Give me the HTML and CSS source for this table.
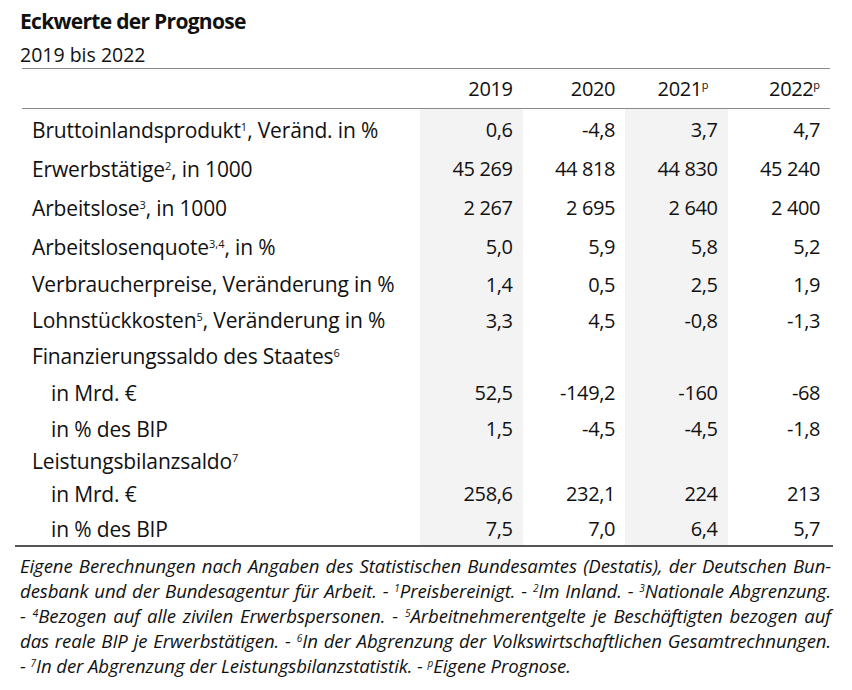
FILE: index.html
```html
<!DOCTYPE html>
<html lang="de">
<head>
<meta charset="utf-8">
<title>Eckwerte der Prognose</title>
<link rel="stylesheet" href="styles.css">
</head>
<body>
<div class="page">
  <h1 class="title">Eckwerte der Prognose</h1>
  <div class="subtitle">2019 bis 2022</div>
  <table class="data">
    <colgroup>
      <col class="c-label"><col class="c-num"><col class="c-num"><col class="c-num"><col class="c-num">
    </colgroup>
    <thead>
      <tr>
        <th></th>
        <th>2019</th>
        <th>2020</th>
        <th class="h-2021">2021<sup>p</sup></th>
        <th>2022<sup>p</sup></th>
      </tr>
    </thead>
    <tbody>
      <tr class="r39"><td class="lbl">Bruttoinlandsprodukt<sup>1</sup>, Veränd. in %</td><td class="sh">0,6</td><td>-4,8</td><td class="sh">3,7</td><td>4,7</td></tr>
      <tr class="r39"><td class="lbl">Erwerbstätige<sup>2</sup>, in 1000</td><td class="sh">45 269</td><td>44 818</td><td class="sh">44 830</td><td>45 240</td></tr>
      <tr class="r39"><td class="lbl">Arbeitslose<sup>3</sup>, in 1000</td><td class="sh">2 267</td><td>2 695</td><td class="sh">2 640</td><td>2 400</td></tr>
      <tr class="r39"><td class="lbl">Arbeitslosenquote<sup>3,4</sup>, in %</td><td class="sh">5,0</td><td>5,9</td><td class="sh">5,8</td><td>5,2</td></tr>
      <tr class="r36"><td class="lbl">Verbraucherpreise, Veränderung in %</td><td class="sh">1,4</td><td>0,5</td><td class="sh">2,5</td><td>1,9</td></tr>
      <tr class="r36"><td class="lbl">Lohnstückkosten<sup>5</sup>, Veränderung in %</td><td class="sh">3,3</td><td>4,5</td><td class="sh">-0,8</td><td>-1,3</td></tr>
      <tr class="r36"><td class="lbl">Finanzierungssaldo des Staates<sup>6</sup></td><td class="sh"></td><td></td><td class="sh"></td><td></td></tr>
      <tr class="r37"><td class="lbl sub">in Mrd. €</td><td class="sh">52,5</td><td>-149,2</td><td class="sh">-160</td><td>-68</td></tr>
      <tr class="r35"><td class="lbl sub">in % des BIP</td><td class="sh">1,5</td><td>-4,5</td><td class="sh">-4,5</td><td>-1,8</td></tr>
      <tr class="r30"><td class="lbl">Leistungsbilanzsaldo<sup>7</sup></td><td class="sh"></td><td></td><td class="sh"></td><td></td></tr>
      <tr class="r35"><td class="lbl sub">in Mrd. €</td><td class="sh">258,6</td><td>232,1</td><td class="sh">224</td><td>213</td></tr>
      <tr class="r35"><td class="lbl sub">in % des BIP</td><td class="sh">7,5</td><td>7,0</td><td class="sh">6,4</td><td>5,7</td></tr>
    </tbody>
  </table>
  <div class="notes">
    <span class="ln">Eigene Berechnungen nach Angaben des Statistischen Bundesamtes (Destatis), der Deutschen Bun-</span>
    <span class="ln">desbank und der Bundesagentur für Arbeit. - <sup>1</sup>Preisbereinigt. - <sup>2</sup>Im Inland. - <sup>3</sup>Nationale Abgrenzung.</span>
    <span class="ln">- <sup>4</sup>Bezogen auf alle zivilen Erwerbspersonen. - <sup>5</sup>Arbeitnehmerentgelte je Beschäftigten bezogen auf</span>
    <span class="ln">das reale BIP je Erwerbstätigen. - <sup>6</sup>In der Abgrenzung der Volkswirtschaftlichen Gesamtrechnungen.</span>
    <span class="ln last">- <sup>7</sup>In der Abgrenzung der Leistungsbilanzstatistik. - <sup>p</sup>Eigene Prognose.</span>
  </div>
</div>
</body>
</html>
```

FILE: styles.css
```css
html, body {
  margin: 0;
  padding: 0;
  background: #ffffff;
}

body {
  font-family: "Open Sans", "Noto Sans", sans-serif;
  color: #111111;
}

.page {
  width: 852px;
  height: 690px;
  padding-top: 8px;
  box-sizing: border-box;
}

.title {
  margin: 0 0 0 20px;
  font-size: 21px;
  font-weight: 700;
  line-height: 26px;
  letter-spacing: -0.7px;
}

.subtitle {
  margin: 8px 0 0 20px;
  font-size: 19.5px;
  line-height: 26px;
}

.data {
  margin-left: 22px;
  width: 808px;
  border-collapse: collapse;
  table-layout: fixed;
  border-top: 1.5px solid #8a8a8a;
  font-size: 20px;
  letter-spacing: -0.4px;
}

.c-label { width: 398px; }
.c-num { width: 102.5px; }

.data th {
  height: 39px;
  padding: 0 10px 0 0;
  text-align: right;
  font-weight: 400;
  border-bottom: 1.5px solid #8a8a8a;
  vertical-align: middle;
}

.data th.h-2021 {
  padding-right: 19px;
}

.data sup {
  font-size: 11px;
  vertical-align: 7px;
  line-height: 0;
  letter-spacing: 0;
}

.data td {
  padding: 2px 10px 0 0;
  text-align: right;
  vertical-align: middle;
  white-space: nowrap;
}

.data td.lbl {
  text-align: left;
  padding-left: 10px;
  font-size: 21px;
  letter-spacing: -0.15px;
}

.data td.sub {
  padding-left: 29px;
}

.data td.sh {
  background: #f3f3f3;
}

.r39 td { height: 37px; }
.r37 td { height: 35px; }
.r36 td { height: 34px; }
.r35 td { height: 33px; }
.r30 td { height: 28px; }

.notes {
  margin-left: 15px;
  width: 818px;
  border-top: 2px solid #555555;
  padding: 6px 2px 0 5px;
  box-sizing: border-box;
  font-style: italic;
  font-size: 18.6px;
  letter-spacing: -0.1px;
  line-height: 25px;
}

.notes .ln {
  display: block;
  text-align: justify;
  text-align-last: justify;
  white-space: nowrap;
}

.notes .ln.last {
  text-align-last: left;
}

.notes sup {
  font-size: 10px;
  vertical-align: 6px;
  line-height: 0;
  letter-spacing: 0;
}
```
